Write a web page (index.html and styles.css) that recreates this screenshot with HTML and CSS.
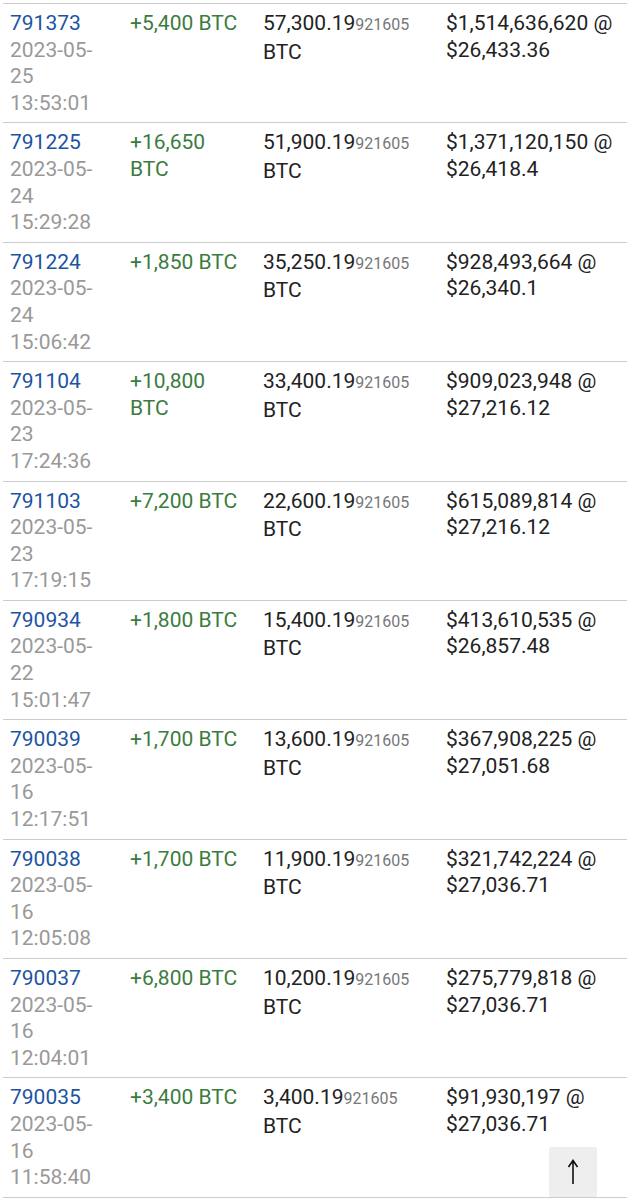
FILE: index.html
```html
<!DOCTYPE html>
<html lang="en">
<head>
    <meta charset="UTF-8">
    <meta name="viewport" content="width=device-width, initial-scale=1.0">
    <title>Balance history</title>
    <link rel="stylesheet" href="styles.css">
</head>
<body>
    <table class="history">
        <colgroup>
            <col class="col-block">
            <col class="col-change">
            <col class="col-balance">
            <col class="col-value">
        </colgroup>
        <tbody>
            <tr>
                <td><a href="#">791373</a><span class="date">2023-05-25 13:53:01</span></td>
                <td class="plus">+5,400 BTC</td>
                <td>57,300.19<span class="sats">921605</span> BTC</td>
                <td>$1,514,636,620 @ $26,433.36</td>
            </tr>
            <tr>
                <td><a href="#">791225</a><span class="date">2023-05-24 15:29:28</span></td>
                <td class="plus">+16,650 BTC</td>
                <td>51,900.19<span class="sats">921605</span> BTC</td>
                <td>$1,371,120,150 @ $26,418.4</td>
            </tr>
            <tr>
                <td><a href="#">791224</a><span class="date">2023-05-24 15:06:42</span></td>
                <td class="plus">+1,850 BTC</td>
                <td>35,250.19<span class="sats">921605</span> BTC</td>
                <td>$928,493,664 @ $26,340.1</td>
            </tr>
            <tr>
                <td><a href="#">791104</a><span class="date">2023-05-23 17:24:36</span></td>
                <td class="plus">+10,800 BTC</td>
                <td>33,400.19<span class="sats">921605</span> BTC</td>
                <td>$909,023,948 @ $27,216.12</td>
            </tr>
            <tr>
                <td><a href="#">791103</a><span class="date">2023-05-23 17:19:15</span></td>
                <td class="plus">+7,200 BTC</td>
                <td>22,600.19<span class="sats">921605</span> BTC</td>
                <td>$615,089,814 @ $27,216.12</td>
            </tr>
            <tr>
                <td><a href="#">790934</a><span class="date">2023-05-22 15:01:47</span></td>
                <td class="plus">+1,800 BTC</td>
                <td>15,400.19<span class="sats">921605</span> BTC</td>
                <td>$413,610,535 @ $26,857.48</td>
            </tr>
            <tr>
                <td><a href="#">790039</a><span class="date">2023-05-16 12:17:51</span></td>
                <td class="plus">+1,700 BTC</td>
                <td>13,600.19<span class="sats">921605</span> BTC</td>
                <td>$367,908,225 @ $27,051.68</td>
            </tr>
            <tr>
                <td><a href="#">790038</a><span class="date">2023-05-16 12:05:08</span></td>
                <td class="plus">+1,700 BTC</td>
                <td>11,900.19<span class="sats">921605</span> BTC</td>
                <td>$321,742,224 @ $27,036.71</td>
            </tr>
            <tr>
                <td><a href="#">790037</a><span class="date">2023-05-16 12:04:01</span></td>
                <td class="plus">+6,800 BTC</td>
                <td>10,200.19<span class="sats">921605</span> BTC</td>
                <td>$275,779,818 @ $27,036.71</td>
            </tr>
            <tr>
                <td><a href="#">790035</a><span class="date">2023-05-16 11:58:40</span></td>
                <td class="plus">+3,400 BTC</td>
                <td>3,400.19<span class="sats">921605</span> BTC</td>
                <td>$91,930,197 @ $27,036.71</td>
            </tr>
        </tbody>
    </table>

    <a href="#" class="to-top" aria-label="Back to top">
        <svg width="12" height="26" viewBox="0 0 12 26">
            <path d="M6 25V2M1.5 8L6 1.5L10.5 8" fill="none" stroke="#111" stroke-width="1.6"/>
        </svg>
    </a>
</body>
</html>
```

FILE: styles.css
```css
body {
    font-family: Roboto, "Noto Sans", sans-serif;
    font-size: 21px;
    line-height: 26.6px;
    color: #222;
    background-color: #fff;
    margin: 0;
    padding: 3px 3px 0;
}
.history {
    width: 100%;
    table-layout: fixed;
    border-collapse: collapse;
    border-top: 1px solid #ccc;
}
.col-block {
    width: 120px;
}
.col-change {
    width: 133px;
}
.col-balance {
    width: 183px;
}
.history td {
    vertical-align: top;
    padding: 6px 7px;
    border-bottom: 1px solid #ccc;
}
.history a {
    color: #1d54a2;
    text-decoration: none;
    display: block;
}
.date {
    display: block;
    color: #999;
}
.history td.plus {
    color: #3b7c3e;
    padding-right: 10px;
}
.sats {
    font-size: 16px;
    color: #777;
}
.to-top {
    position: fixed;
    right: 33px;
    bottom: 3px;
    width: 48px;
    height: 50px;
    background-color: #eee;
    border-radius: 2px;
    display: flex;
    align-items: center;
    justify-content: center;
}
```
